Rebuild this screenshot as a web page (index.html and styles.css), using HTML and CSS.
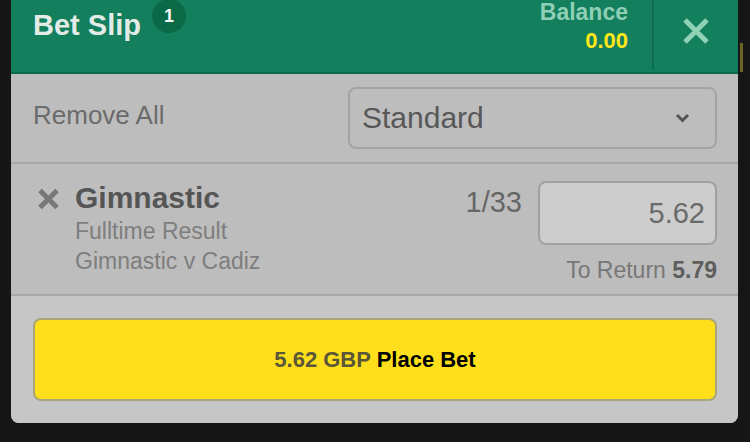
FILE: index.html
```html
<!DOCTYPE html>
<html lang="en">
<head>
    <meta charset="UTF-8">
    <meta name="viewport" content="width=device-width, initial-scale=1.0">
    <title>Bet Slip</title>
    <link rel="stylesheet" href="styles.css">
</head>
<body>
    <div class="slip">
        <div class="slip-header">
            <div class="title">
                <span class="title-text">Bet Slip</span>
                <span class="badge">1</span>
            </div>
            <div class="balance">
                <div class="balance-label">Balance</div>
                <div class="balance-value">0.00</div>
            </div>
            <div class="header-divider"></div>
            <button class="close-button" type="button" aria-label="Close">
                <svg width="28" height="28" viewBox="0 0 28 28">
                    <path d="M3 3 L25 25 M25 3 L3 25" stroke="#8fd3b7" stroke-width="5" fill="none"/>
                </svg>
            </button>
        </div>

        <div class="options-row">
            <span class="remove-all">Remove All</span>
            <div class="bet-type">
                <span>Standard</span>
                <svg width="15" height="10" viewBox="0 0 15 10">
                    <path d="M2 2 L7.5 7.5 L13 2" stroke="#555" stroke-width="3" fill="none"/>
                </svg>
            </div>
        </div>

        <div class="selection">
            <div class="remove-icon">
                <svg width="23" height="22" viewBox="0 0 23 22">
                    <path d="M3 2.5 L20 19.5 M20 2.5 L3 19.5" stroke="#777" stroke-width="5" fill="none"/>
                </svg>
            </div>
            <div class="selection-info">
                <div class="selection-name">Gimnastic</div>
                <div class="selection-market">Fulltime Result</div>
                <div class="selection-market">Gimnastic v Cadiz</div>
            </div>
            <div class="selection-stake">
                <div class="stake-line">
                    <span class="odds">1/33</span>
                    <div class="stake-input">5.62</div>
                </div>
                <div class="to-return">To Return <strong>5.79</strong></div>
            </div>
        </div>

        <div class="slip-footer">
            <button class="place-bet" type="button">
                <span class="place-amount">5.62 GBP</span> Place Bet
            </button>
        </div>
    </div>
    <div class="edge-strip"></div>
</body>
</html>
```

FILE: styles.css
```css
body {
    margin: 0;
    background-color: #161616;
    font-family: 'Liberation Sans', Arial, sans-serif;
    display: flex;
    align-items: flex-start;
}

.slip {
    margin-left: 11px;
    width: 727px;
    background-color: #bdbdbd;
    border-radius: 0 0 8px 8px;
    overflow: hidden;
}

/* header */

.slip-header {
    display: flex;
    height: 72px;
    background-color: #137f5d;
    border-bottom: 2px solid #0c6b4a;
}

.title {
    flex: 1;
    display: flex;
    align-items: flex-start;
    padding-left: 22px;
}

.title-text {
    margin-top: 11px;
    font-size: 29px;
    line-height: 29px;
    font-weight: bold;
    color: #e3ebe7;
}

.badge {
    margin-top: -1px;
    margin-left: 11px;
    width: 34px;
    height: 34px;
    border-radius: 50%;
    background-color: #0a6a48;
    color: #f2f7f4;
    font-size: 18px;
    font-weight: bold;
    display: flex;
    align-items: center;
    justify-content: center;
}

.balance {
    text-align: right;
    padding-right: 24px;
    padding-top: 1px;
    font-weight: bold;
}

.balance-label {
    font-size: 23px;
    line-height: 23px;
    color: #8fcfb5;
}

.balance-value {
    margin-top: 6px;
    font-size: 22px;
    line-height: 22px;
    color: #ffe81a;
}

.header-divider {
    width: 2px;
    height: 70px;
    background-color: #0e6d4e;
}

.close-button {
    width: 84px;
    padding: 0;
    border: none;
    background: none;
    display: flex;
    align-items: center;
    justify-content: center;
    padding-bottom: 10px;
}

/* bet type row */

.options-row {
    display: flex;
    align-items: center;
    justify-content: space-between;
    height: 88px;
    padding: 0 21px 0 22px;
    border-bottom: 2px solid #a8a8a8;
}

.remove-all {
    margin-bottom: 5px;
    font-size: 26px;
    color: #6b6b6b;
}

.bet-type {
    width: 369px;
    height: 62px;
    box-sizing: border-box;
    border: 2px solid #a3a3a3;
    border-radius: 8px;
    display: flex;
    align-items: center;
    justify-content: space-between;
    padding: 0 25px 0 12px;
    font-size: 30px;
    color: #575757;
}

/* selection */

.selection {
    display: flex;
    height: 132px;
    box-sizing: border-box;
    padding: 17px 21px 0 22px;
    border-bottom: 2px solid #a8a8a8;
}

.remove-icon {
    margin: 7px 15px 0 4px;
    height: 22px;
}

.selection-info {
    flex: 1;
    margin-top: 1px;
}

.selection-name {
    font-size: 30px;
    line-height: 32px;
    font-weight: bold;
    color: #555555;
}

.selection-market {
    font-size: 23px;
    line-height: 30px;
    color: #7e7e7e;
}

.selection-name + .selection-market {
    margin-top: 2px;
}

.selection-stake {
    display: flex;
    flex-direction: column;
    align-items: flex-end;
}

.stake-line {
    display: flex;
    align-items: flex-start;
    gap: 16px;
}

.odds {
    margin-top: 7px;
    font-size: 29px;
    line-height: 29px;
    color: #666666;
}

.stake-input {
    width: 179px;
    height: 64px;
    box-sizing: border-box;
    border: 2px solid #a0a0a0;
    border-radius: 8px;
    background-color: #cdcdcd;
    font-size: 29px;
    color: #6a6a6a;
    display: flex;
    align-items: center;
    justify-content: flex-end;
    padding-right: 10px;
}

.to-return {
    margin-top: 14px;
    font-size: 23px;
    line-height: 22px;
    color: #777777;
}

.to-return strong {
    color: #5e5e5e;
}

/* footer */

.slip-footer {
    background-color: #c6c6c6;
    padding: 22px 21px 22px 22px;
}

.place-bet {
    width: 100%;
    height: 83px;
    border: 2px solid #a9a47a;
    border-radius: 8px;
    background-color: #ffdf1b;
    font-family: 'Liberation Sans', Arial, sans-serif;
    font-size: 22px;
    font-weight: bold;
    color: #000000;
}

.place-amount {
    color: #5a5638;
}

.edge-strip {
    margin-top: 43px;
    margin-left: 2px;
    width: 3px;
    height: 29px;
    background-color: #6f6428;
}
```
